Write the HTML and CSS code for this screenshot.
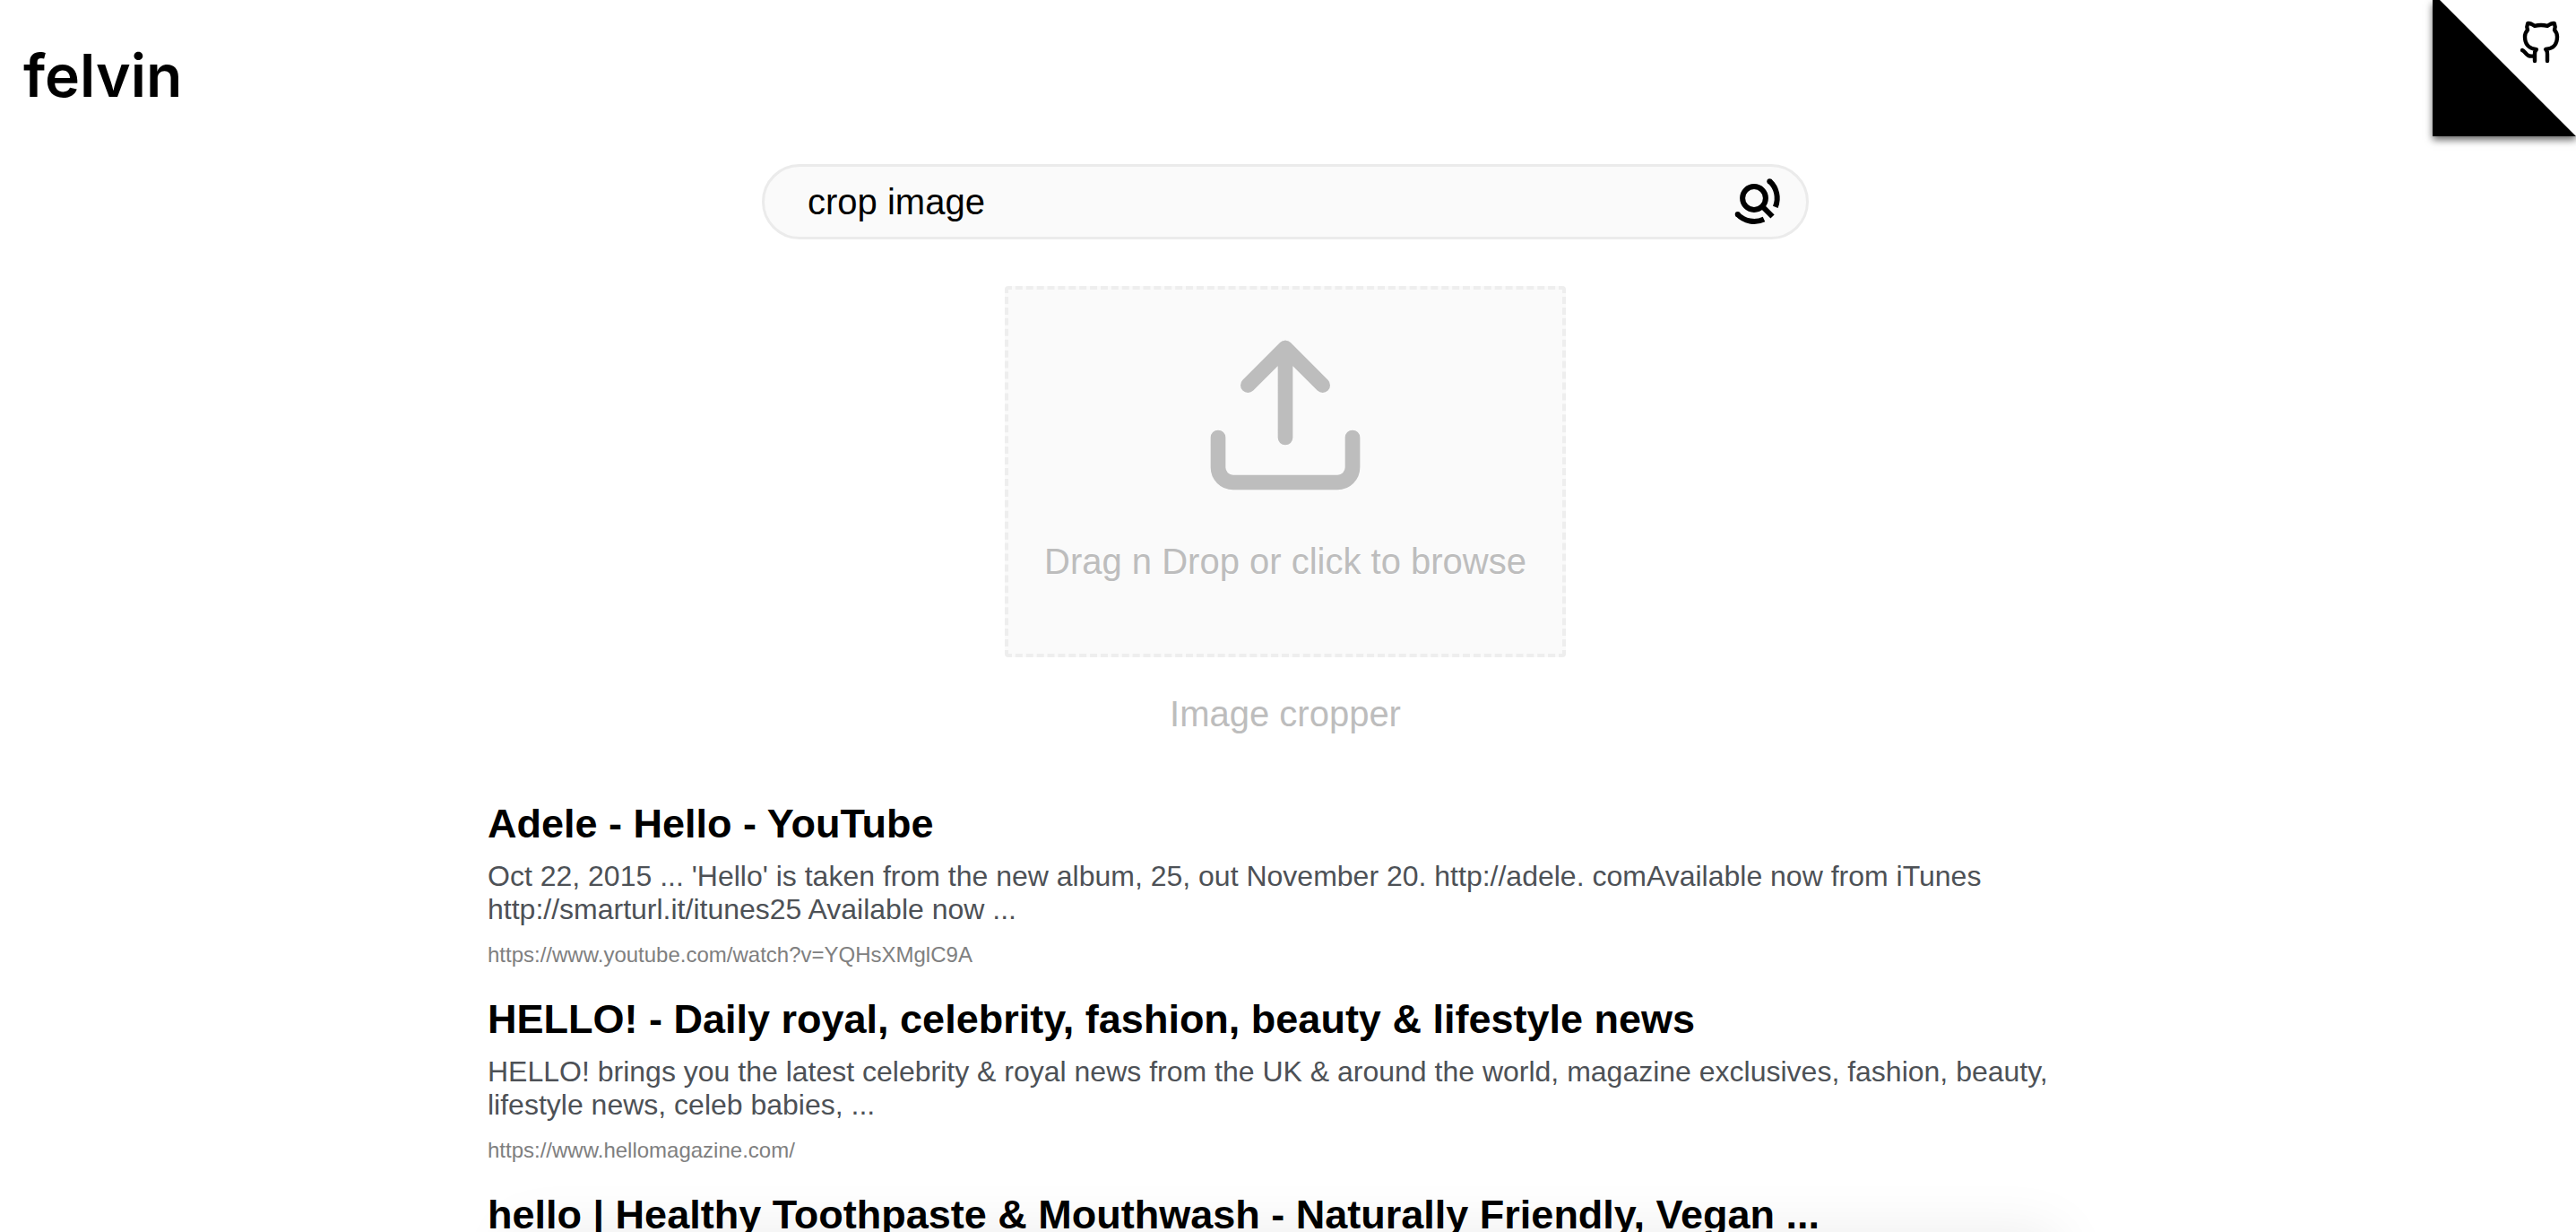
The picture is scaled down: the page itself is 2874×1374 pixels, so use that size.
FILE: index.html
```html
<!DOCTYPE html>
<html lang="en">
<head>
<meta charset="utf-8">
<title>crop image - felvin</title>
<link rel="stylesheet" href="styles.css">
</head>
<body>
<header class="header">
  <a class="logo" href="#">felvin</a>
  <a class="github" href="#" aria-label="GitHub">
    <svg class="github-corner" viewBox="0 0 160 152" aria-hidden="true"><path d="M0 0h8l152 152H0z"/></svg>
    <svg class="github-icon" viewBox="0 0 24 24" aria-hidden="true"><path d="M9 19c-5 1.500-5-2.500-7-3m14 6v-3.870a3.370 3.370 0 0 0-.94-2.610c3.140-.35 6.440-1.540 6.440-7A5.440 5.440 0 0 0 20 4.770 5.070 5.070 0 0 0 19.910 1S18.730.65 16 2.480a13.380 13.380 0 0 0-7 0C6.270.65 5.090 1 5.090 1A5.070 5.070 0 0 0 5 4.770a5.440 5.440 0 0 0-1.500 3.780c0 5.420 3.300 6.610 6.440 7A3.370 3.370 0 0 0 9 18.130V22"/></svg>
  </a>
</header>
<main class="main">
  <form class="search" role="search">
    <input class="search-input" type="text" aria-label="Search" value="crop image">
    <button class="search-button" type="submit" aria-label="Search">
      <svg class="search-icon" viewBox="0 0 52 52" aria-hidden="true">
        <circle cx="22" cy="22" r="12.900"/>
        <path d="M31 31l11.500 11.500"/>
        <path d="M39.300 3a25.700 25.700 0 0 1 6.500 28.800M3.500 40a25.700 25.700 0 0 0 29.500 5.500"/>
        <circle class="dot" cx="39.300" cy="3.200" r="3"/>
        <circle class="dot" cx="3.700" cy="40" r="3"/>
      </svg>
    </button>
  </form>
  <section class="app">
    <button class="dropzone" type="button">
      <svg class="upload-icon" viewBox="0 0 24 24" aria-hidden="true"><path d="M21 15v4a2 2 0 0 1-2 2H5a2 2 0 0 1-2-2v-4M17 8l-5-5-5 5M12 3v12"/></svg>
      <span class="dropzone-text">Drag n Drop or click to browse</span>
    </button>
    <p class="app-name">Image cropper</p>
  </section>
  <section class="results">
    <article class="result">
      <h2 class="result-title"><a href="#">Adele - Hello - YouTube</a></h2>
      <p class="result-text">Oct 22, 2015 ... 'Hello' is taken from the new album, 25, out November 20. http://adele. comAvailable now from iTunes http://smarturl.it/itunes25 Available now ...</p>
      <a class="result-url" href="#">https://www.youtube.com/watch?v=YQHsXMglC9A</a>
    </article>
    <article class="result">
      <h2 class="result-title"><a href="#">HELLO! - Daily royal, celebrity, fashion, beauty &amp; lifestyle news</a></h2>
      <p class="result-text">HELLO! brings you the latest celebrity &amp; royal news from the UK &amp; around the world, magazine exclusives, fashion, beauty, lifestyle news, celeb babies, ...</p>
      <a class="result-url" href="#">https://www.hellomagazine.com/</a>
    </article>
    <article class="result">
      <h2 class="result-title"><a href="#">hello | Healthy Toothpaste &amp; Mouthwash - Naturally Friendly, Vegan ...</a></h2>
    </article>
  </section>
</main>
<div class="bottom-bar"></div>
</body>
</html>
```
FILE: styles.css
```css
* {
  box-sizing: border-box;
}

body {
  margin: 0;
  height: 100vh;
  overflow: hidden;
  background: #fff;
  color: #000;
  font-family: "Liberation Sans", Arial, Helvetica, sans-serif;
}

a {
  color: inherit;
  text-decoration: none;
}

svg {
  display: block;
  overflow: visible;
}

.header {
  position: relative;
  padding: 36px 26px 0;
}

.logo {
  display: block;
  width: max-content;
  font: 600 66px/96px Inter, sans-serif;
}

.github {
  position: absolute;
  top: 0;
  right: 0;
  width: 160px;
  height: 152px;
  box-shadow: 0 4px 8px rgba(0, 0, 0, 0.6);
}

.github-corner {
  width: 160px;
  height: 152px;
}

.github-icon {
  position: absolute;
  top: 24px;
  right: 16px;
  width: 48px;
  height: 48px;
  fill: none;
  stroke: #000;
  stroke-width: 2.2;
  stroke-linecap: round;
  stroke-linejoin: round;
}

.main {
  display: flex;
  flex-direction: column;
  align-items: center;
  padding: 51px 6px 0 0;
}

.search {
  display: flex;
  align-items: center;
  width: 1168px;
  max-width: 90%;
  height: 84px;
  padding: 0 28px 0 48px;
  border: 3px solid #ebebeb;
  border-radius: 42px;
  background: #fafafa;
}

.search-input {
  flex: 1;
  min-width: 0;
  padding: 0;
  border: 0;
  outline: 0;
  background: none;
  color: #000;
  font: 40px/46px "Liberation Sans", Arial, sans-serif;
}

.search-button {
  padding: 0;
  border: 0;
  background: none;
}

.search-icon {
  width: 52px;
  height: 52px;
  fill: none;
  stroke: #000;
  stroke-width: 6;
}

.dot {
  fill: #000;
  stroke: none;
}

.app {
  display: flex;
  flex-direction: column;
  align-items: center;
  padding-top: 52px;
  color: #bdbdbd;
  font-size: 40px;
  line-height: 46px;
}

.dropzone {
  display: flex;
  flex-direction: column;
  align-items: center;
  padding: 40px;
  border: 4px dashed #eee;
  border-radius: 4px;
  background: #fafafa;
  color: inherit;
  font: inherit;
}

.upload-icon {
  width: 200px;
  height: 200px;
  fill: none;
  stroke: #bdbdbd;
  stroke-width: 2;
  stroke-linecap: round;
  stroke-linejoin: round;
}

.dropzone-text {
  margin: 40px 0;
}

.app-name {
  margin: 40px 0 0;
}

.results {
  width: 1780px;
  max-width: 90%;
  padding-top: 74px;
}

.result {
  margin-bottom: 32px;
}

.result-title {
  margin: 0 0 14px;
  font-size: 45px;
  line-height: 52px;
}

.result-text {
  margin: 0 0 18px;
  color: #4d5156;
  font-size: 32px;
  line-height: 37px;
}

.result-url {
  display: block;
  color: #808080;
  font-size: 24px;
  line-height: 28px;
}

.bottom-bar {
  position: fixed;
  top: 100%;
  left: 0;
  right: 6px;
  width: 60%;
  height: 80px;
  margin: 0 auto;
  box-shadow: 0 0 64px rgba(0, 0, 0, 0.08);
}
```
